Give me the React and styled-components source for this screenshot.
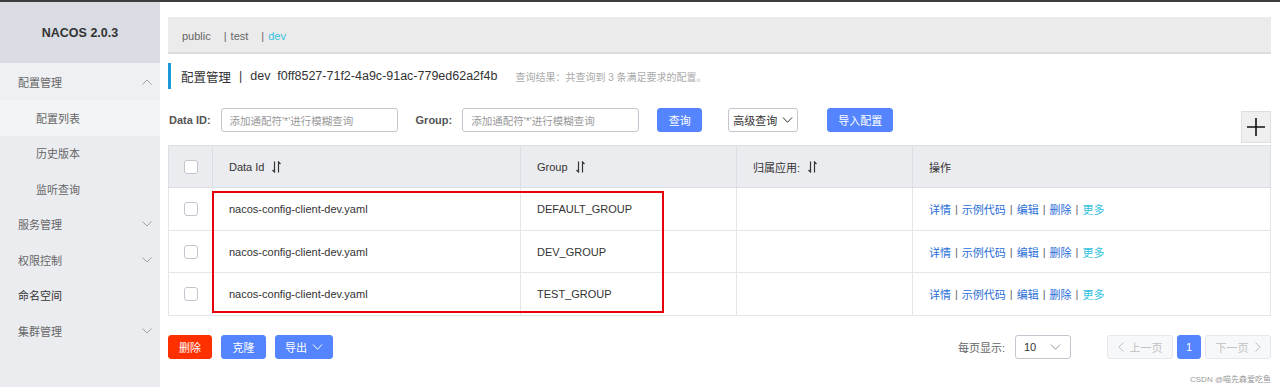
import React from "react";
import styled, { createGlobalStyle } from "styled-components";

const GlobalStyle = createGlobalStyle`
  html, body { margin: 0; padding: 0; background: #fff; }
  body { font-family: "Liberation Sans", Arial, "Noto Sans CJK SC", sans-serif; color: #333; }
  * { box-sizing: border-box; }
`;

const Page = styled.div`
  position: relative;
  display: flex;
  width: 1280px;
  height: 387px;
  border-top: 2px solid #3c3c3c;
  overflow: hidden;
`;

const Sidebar = styled.aside`
  width: 160px;
  flex-shrink: 0;
  background: #eaecf0;
  display: flex;
  flex-direction: column;
`;

const SideHeader = styled.div`
  height: 61px;
  background: #d9dce2;
  display: flex;
  align-items: center;
  justify-content: center;
  font-weight: bold;
  font-size: 12.5px;
  color: #333;
`;

const MenuItem = styled.div`
  height: ${(p) => p.$h || 35.5}px;
  display: flex;
  align-items: center;
  justify-content: space-between;
  padding: 0 8px 0 ${(p) => (p.$sub ? 36 : 18)}px;
  font-size: 11px;
  color: ${(p) => (p.$dark ? "#333" : "#666")};
  background: ${(p) => (p.$selected ? "#f3f4f6" : p.$open ? "#eef0f3" : "transparent")};
`;

const Main = styled.main`
  flex: 1;
  min-width: 0;
  padding: 15px 9px 0 8px;
  display: flex;
  flex-direction: column;
`;

const NsBar = styled.div`
  height: 37px;
  background: #ebebeb;
  border-bottom: 2px solid #dcdcdc;
  display: flex;
  align-items: center;
  padding: 3px 0 0 14px;
  font-size: 11px;
  color: #666;
`;

const NsItem = styled.span`
  color: ${(p) => (p.$active ? "#33c3e0" : "#666")};
`;

const NsSep = styled.span`
  margin: 0 4px 0 13px;
  color: #666;
`;

const TitleRow = styled.div`
  margin-top: 9px;
  height: 26px;
  border-left: 3px solid #1a9ad6;
  padding-left: 10px;
  display: flex;
  align-items: center;
  font-size: 12.5px;
  color: #333;
  white-space: nowrap;
`;

const TitleSep = styled.span`
  margin: 0 8px;
`;

const TitleSub = styled.span`
  margin-left: 18px;
  font-size: 10px;
  color: #aaa;
`;

const FilterRow = styled.div`
  margin-top: 19px;
  display: flex;
  align-items: flex-start;
`;

const Label = styled.label`
  height: 24px;
  line-height: 24px;
  font-size: 11px;
  font-weight: bold;
  color: #555;
  margin-left: ${(p) => p.$ml || 1}px;
  margin-right: ${(p) => p.$mr || 10}px;
`;

const Input = styled.div`
  width: 177px;
  height: 24px;
  border: 1px solid #c4c6cf;
  border-radius: 3px;
  background: #fff;
  padding-left: 8px;
  display: flex;
  align-items: center;
  font-size: 10.5px;
  color: #999;
`;

const Button = styled.button`
  height: 24px;
  width: ${(p) => p.$w}px;
  padding: 0;
  margin: 0 0 0 ${(p) => p.$ml || 0}px;
  border-radius: 3px;
  font-family: inherit;
  font-size: 11px;
  white-space: nowrap;
  display: inline-flex;
  align-items: center;
  justify-content: center;
  gap: 5px;
  cursor: pointer;
  border: 1px solid
    ${(p) => (p.$variant === "danger" ? "#ff3000" : p.$variant === "normal" ? "#c4c6cf" : "#5584ff")};
  background: ${(p) => (p.$variant === "danger" ? "#ff3000" : p.$variant === "normal" ? "#fff" : "#5584ff")};
  color: ${(p) => (p.$variant === "normal" ? "#333" : "#fff")};
`;

const PlusButton = styled.div`
  margin-left: auto;
  margin-top: 3px;
  width: 30px;
  height: 32px;
  background: #efefef;
  border: 1px solid #dedede;
  display: flex;
  align-items: center;
  justify-content: center;
`;

const TableWrap = styled.div`
  position: relative;
  margin-top: 2px;
`;

const Table = styled.table`
  width: 100%;
  border-collapse: collapse;
  table-layout: fixed;
  border: 1px solid #dcdee3;
  font-size: 11px;
  color: #333;
`;

const Th = styled.th`
  height: 42px;
  background: #ebecf0;
  border: 1px solid #dcdee3;
  text-align: left;
  font-weight: normal;
  padding: 0 0 0 ${(p) => (p.$check ? 15 : 16)}px;
  color: #333;
`;

const Td = styled.td`
  height: 42.7px;
  border: 1px solid #e4e6ea;
  padding: 0 0 0 ${(p) => (p.$check ? 15 : 16)}px;
`;

const HeadInner = styled.span`
  display: inline-flex;
  align-items: center;
  gap: 8px;
`;

const Checkbox = styled.span`
  display: inline-block;
  width: 14px;
  height: 14px;
  border: 1px solid #c4c6cf;
  border-radius: 3px;
  background: #fff;
  vertical-align: middle;
`;

const Ops = styled.span`
  display: inline-flex;
  align-items: center;
  gap: 4px;
  color: #666;
`;

const OpLink = styled.a`
  color: ${(p) => (p.$more ? "#33c3e0" : "#2a6ed6")};
  text-decoration: none;
`;

const Highlight = styled.div`
  position: absolute;
  left: 44px;
  top: 46px;
  width: 452px;
  height: 122px;
  border: 2px solid #e8000b;
  pointer-events: none;
`;

const BottomRow = styled.div`
  margin-top: 19px;
  display: flex;
  align-items: center;
`;

const PageSizeLabel = styled.span`
  margin-left: auto;
  font-size: 11px;
  color: #666;
  margin-right: 10px;
`;

const Select = styled.div`
  width: 56px;
  height: 24px;
  border: 1px solid #c4c6cf;
  border-radius: 3px;
  display: flex;
  align-items: center;
  justify-content: space-between;
  padding: 0 9px 0 8px;
  font-size: 11px;
  color: #333;
`;

const Pager = styled.div`
  display: flex;
  gap: 4px;
  margin-left: 36px;
`;

const PageBtn = styled.div`
  height: 24px;
  width: ${(p) => p.$w}px;
  border-radius: 3px;
  display: flex;
  align-items: center;
  justify-content: center;
  gap: 6px;
  font-size: 11px;
  border: 1px solid ${(p) => (p.$current ? "#5584ff" : "#e6e7eb")};
  background: ${(p) => (p.$current ? "#5584ff" : "#f7f8fa")};
  color: ${(p) => (p.$current ? "#fff" : "#c1c1c1")};
`;

const Watermark = styled.div`
  position: absolute;
  right: 9px;
  bottom: 3px;
  font-size: 8px;
  color: #999;
`;

const Chevron = ({ dir = "down", color = "#999", w = 9, h = 5 }) => (
  <svg width={w} height={h} viewBox="0 0 10 6" fill="none">
    <polyline
      points={dir === "down" ? "0.5,0.5 5,5.3 9.5,0.5" : "0.5,5.5 5,0.7 9.5,5.5"}
      stroke={color}
      strokeWidth="1"
    />
  </svg>
);

const SideChevron = ({ dir = "down" }) => (
  <svg width="10" height="6" viewBox="0 0 10 6" fill="none">
    <polyline
      points={dir === "down" ? "0.5,0.5 5,5 9.5,0.5" : "0.5,5.5 5,1 9.5,5.5"}
      stroke="#999"
      strokeWidth="0.9"
    />
  </svg>
);

const ArrowLR = ({ dir = "left" }) => (
  <svg width="6" height="10" viewBox="0 0 6 10" fill="none">
    <polyline points={dir === "left" ? "5.5,0.5 0.8,5 5.5,9.5" : "0.5,0.5 5.2,5 0.5,9.5"} stroke="#c1c1c1" strokeWidth="1" />
  </svg>
);

const SortIcon = () => (
  <svg width="9" height="12" viewBox="0 0 9 12" fill="none">
    <path d="M2.5 0.5 V11 L0.5 9" stroke="#333" strokeWidth="1.2" />
    <path d="M6.5 11.5 V1 L8.5 3" stroke="#333" strokeWidth="1.2" />
  </svg>
);

const PlusIcon = () => (
  <svg width="20" height="20" viewBox="0 0 20 20">
    <path d="M10 1 V19 M1 10 H19" stroke="#111" strokeWidth="1.6" />
  </svg>
);

const rows = [
  { id: "nacos-config-client-dev.yaml", group: "DEFAULT_GROUP" },
  { id: "nacos-config-client-dev.yaml", group: "DEV_GROUP" },
  { id: "nacos-config-client-dev.yaml", group: "TEST_GROUP" },
];

const menu = [
  { label: "配置管理", chevron: "up", open: true, h: 37 },
  { label: "配置列表", sub: true, selected: true },
  { label: "历史版本", sub: true },
  { label: "监听查询", sub: true },
  { label: "服务管理", chevron: "down" },
  { label: "权限控制", chevron: "down" },
  { label: "命名空间", dark: true },
  { label: "集群管理", chevron: "down" },
];

export default function App() {
  return (
    <>
      <GlobalStyle />
      <Page>
        <Sidebar>
          <SideHeader>NACOS 2.0.3</SideHeader>
          {menu.map((m) => (
            <MenuItem key={m.label} $sub={m.sub} $selected={m.selected} $open={m.open} $dark={m.dark} $h={m.h}>
              <span>{m.label}</span>
              {m.chevron && <SideChevron dir={m.chevron} />}
            </MenuItem>
          ))}
        </Sidebar>
        <Main>
          <NsBar>
            <NsItem>public</NsItem>
            <NsSep>|</NsSep>
            <NsItem>test</NsItem>
            <NsSep>|</NsSep>
            <NsItem $active>dev</NsItem>
          </NsBar>
          <TitleRow>
            <span>配置管理</span>
            <TitleSep>|</TitleSep>
            <span>dev&nbsp;&nbsp;f0ff8527-71f2-4a9c-91ac-779ed62a2f4b</span>
            <TitleSub>查询结果：共查询到 3 条满足要求的配置。</TitleSub>
          </TitleRow>
          <FilterRow>
            <Label>Data ID:</Label>
            <Input>添加通配符'*'进行模糊查询</Input>
            <Label $ml={18} $mr={10}>Group:</Label>
            <Input>添加通配符'*'进行模糊查询</Input>
            <Button $ml={18} $w={45}>查询</Button>
            <Button $ml={26} $w={70} $variant="normal">
              高级查询 <Chevron color="#333" w={11} h={6} />
            </Button>
            <Button $ml={29} $w={66}>导入配置</Button>
            <PlusButton>
              <PlusIcon />
            </PlusButton>
          </FilterRow>
          <TableWrap>
            <Table>
              <colgroup>
                <col style={{ width: 44 }} />
                <col style={{ width: 308 }} />
                <col style={{ width: 216 }} />
                <col style={{ width: 176 }} />
                <col />
              </colgroup>
              <thead>
                <tr>
                  <Th $check>
                    <Checkbox />
                  </Th>
                  <Th>
                    <HeadInner>
                      Data Id <SortIcon />
                    </HeadInner>
                  </Th>
                  <Th>
                    <HeadInner>
                      Group <SortIcon />
                    </HeadInner>
                  </Th>
                  <Th>
                    <HeadInner>
                      归属应用: <SortIcon />
                    </HeadInner>
                  </Th>
                  <Th>操作</Th>
                </tr>
              </thead>
              <tbody>
                {rows.map((r) => (
                  <tr key={r.group}>
                    <Td $check>
                      <Checkbox />
                    </Td>
                    <Td>{r.id}</Td>
                    <Td>{r.group}</Td>
                    <Td />
                    <Td>
                      <Ops>
                        <OpLink>详情</OpLink>|<OpLink>示例代码</OpLink>|<OpLink>编辑</OpLink>|
                        <OpLink>删除</OpLink>|<OpLink $more>更多</OpLink>
                      </Ops>
                    </Td>
                  </tr>
                ))}
              </tbody>
            </Table>
            <Highlight />
          </TableWrap>
          <BottomRow>
            <Button $variant="danger" $w={44}>删除</Button>
            <Button $ml={9} $w={45}>克隆</Button>
            <Button $ml={9} $w={58}>
              导出 <Chevron color="#fff" w={11} h={6} />
            </Button>
            <PageSizeLabel>每页显示:</PageSizeLabel>
            <Select>
              <span>10</span>
              <Chevron color="#999" w={11} h={6} />
            </Select>
            <Pager>
              <PageBtn $w={66}>
                <ArrowLR dir="left" />
                上一页
              </PageBtn>
              <PageBtn $w={24} $current>1</PageBtn>
              <PageBtn $w={66}>
                下一页
                <ArrowLR dir="right" />
              </PageBtn>
            </Pager>
          </BottomRow>
        </Main>
        <Watermark>CSDN @喵先森爱吃鱼</Watermark>
      </Page>
    </>
  );
}
